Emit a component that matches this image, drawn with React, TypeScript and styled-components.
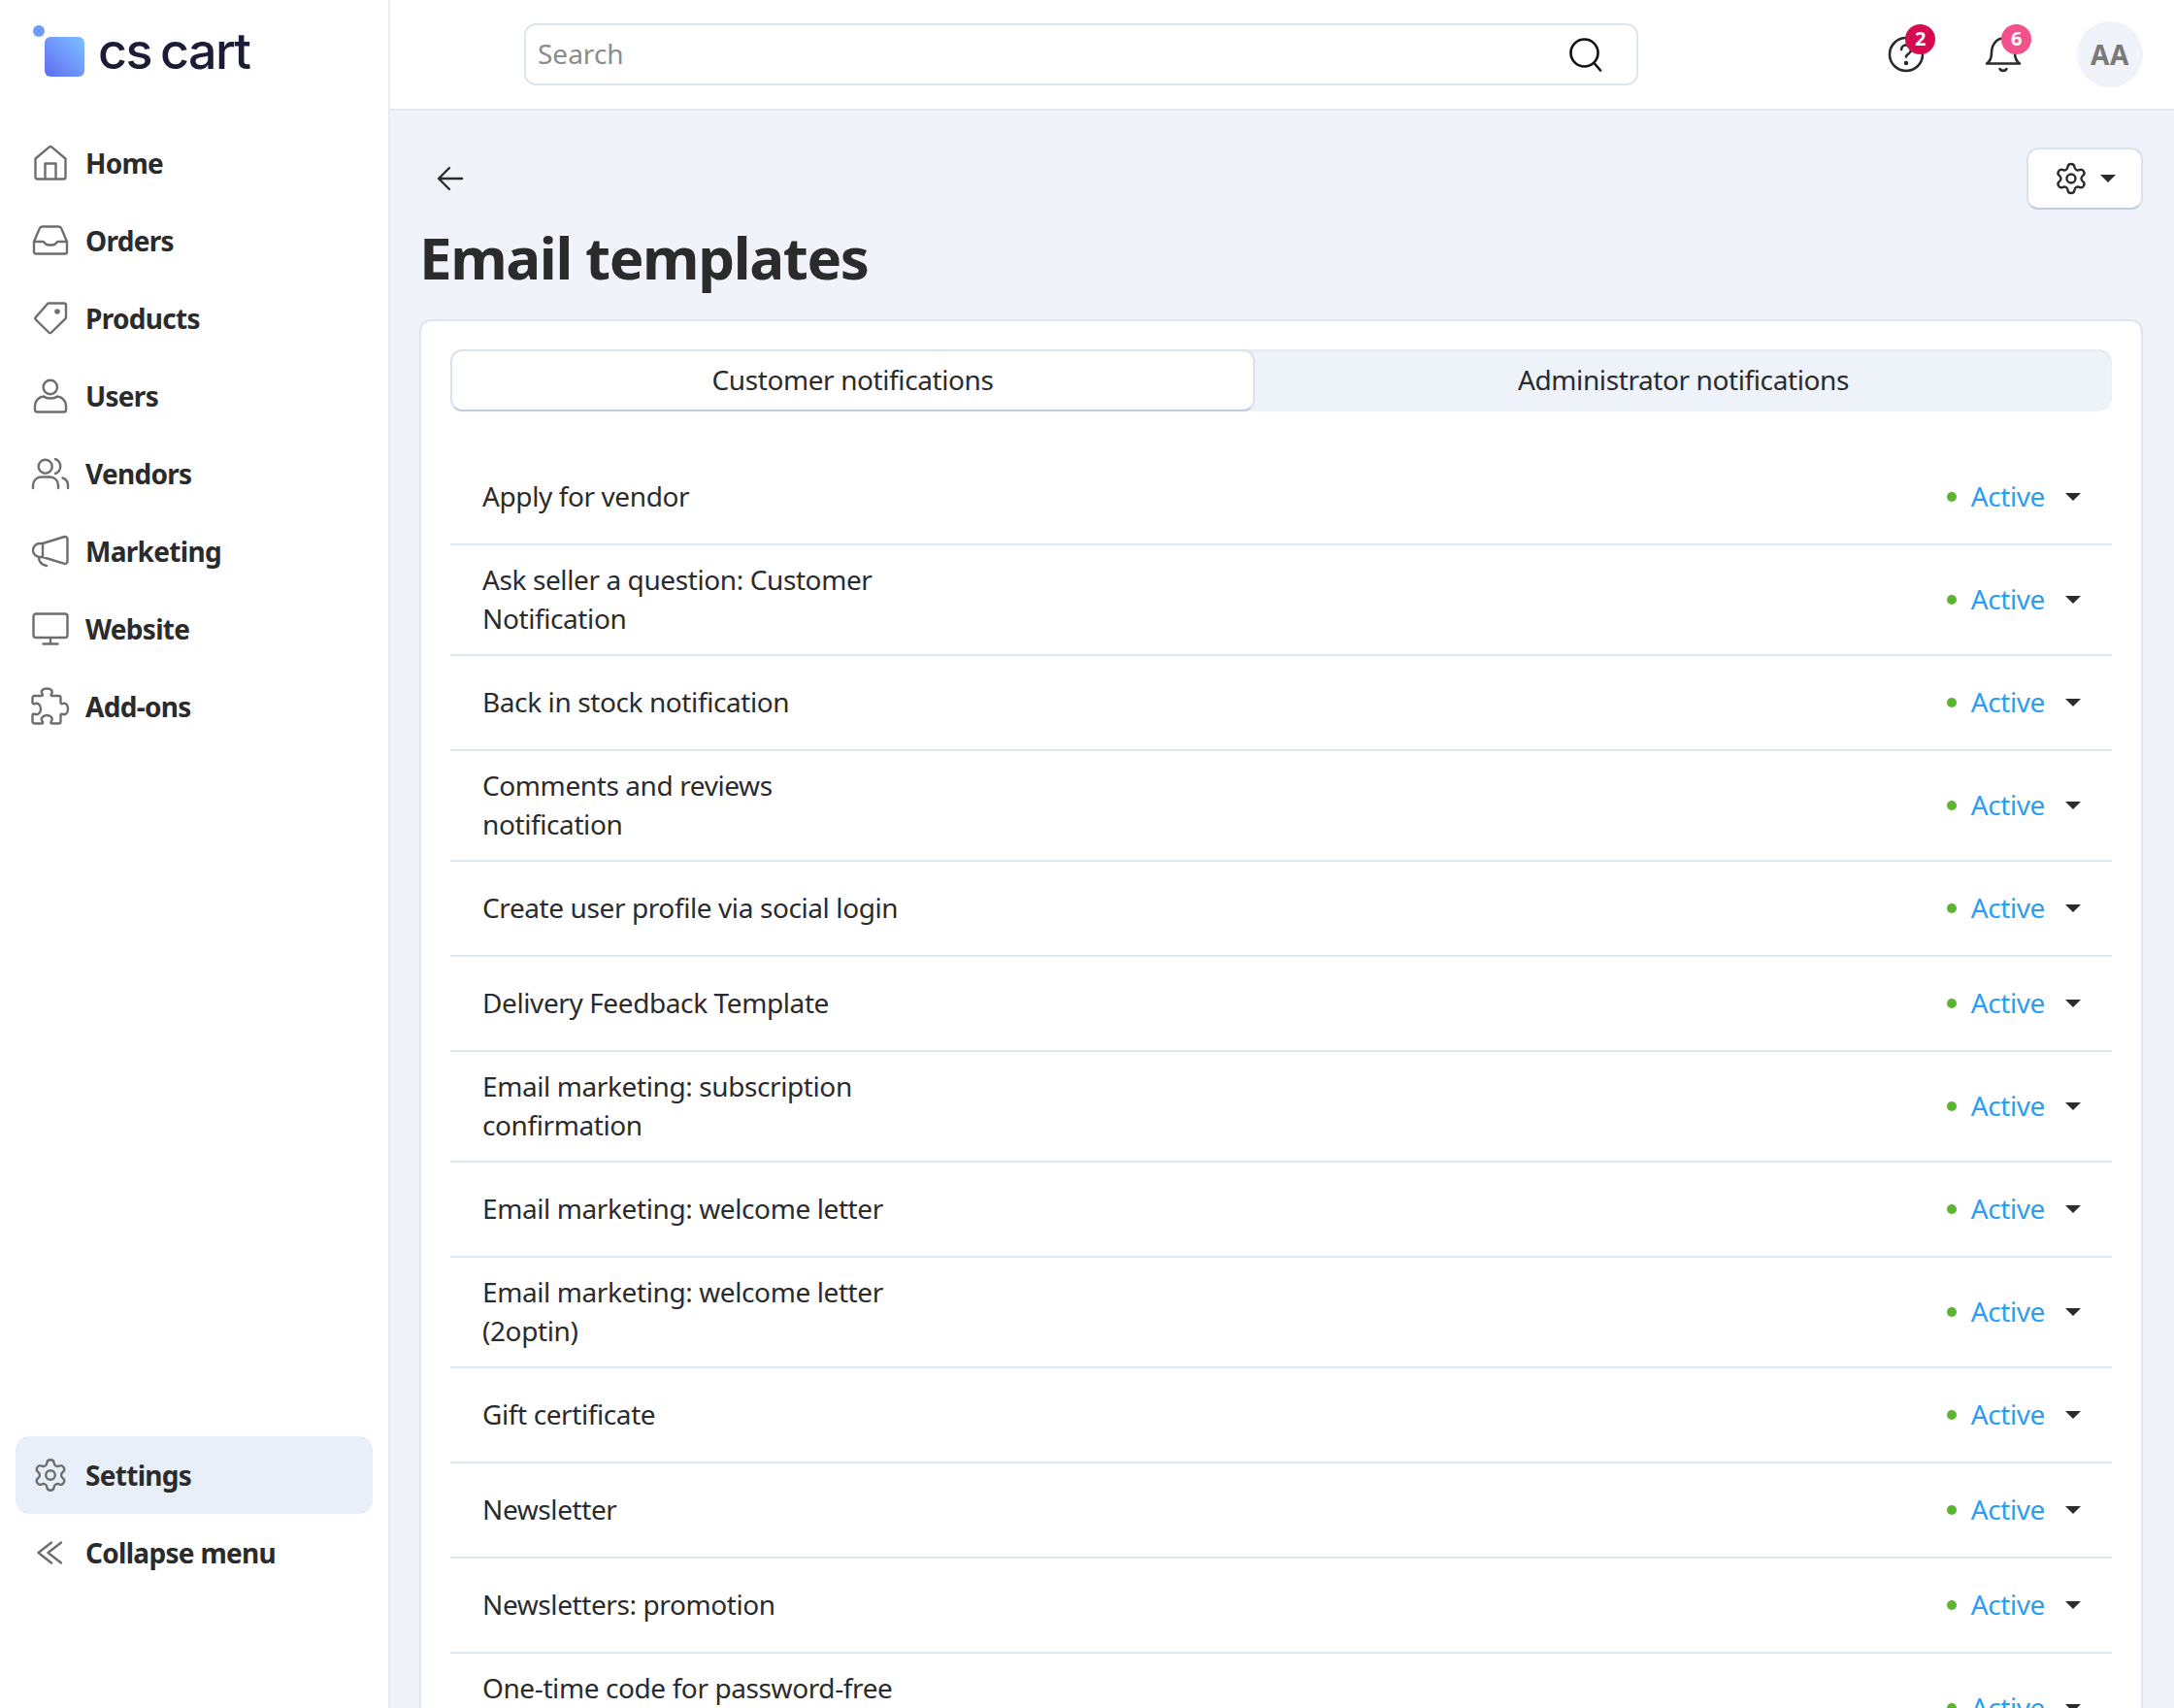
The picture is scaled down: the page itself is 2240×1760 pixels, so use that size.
import * as React from 'react';
import styled, { createGlobalStyle } from 'styled-components';
import { Settings } from 'lucide-react';

const GlobalStyle = createGlobalStyle`
  html, body {
    margin: 0;
    padding: 0;
    background: #f0f3fa;
  }

  body {
    font-family: "Noto Sans", sans-serif;
    font-size: 28px;
    line-height: 40px;
    letter-spacing: -0.4px;
    color: #2b2b2b;
  }
`;

const Page = styled.div`
  display: flex;
  width: 2240px;
  height: 1760px;
  overflow: hidden;
`;

const Sidebar = styled.aside`
  flex: 0 0 402px;
  box-sizing: border-box;
  display: flex;
  flex-direction: column;
  height: 100%;
  padding: 0 16px 120px;
  background: #fff;
  border-right: 2px solid #e7ecf4;
`;

const Logo = styled.div`
  display: flex;
  align-items: center;
  gap: 13px;
  height: 128px;
  padding: 0 0 22px 18px;
  box-sizing: border-box;
`;

const LogoText = styled.span`
  font-family: Inter, sans-serif;
  font-size: 52px;
  font-weight: 500;
  line-height: 60px;
  letter-spacing: -1.6px;
  word-spacing: -3px;
  color: #1b1d36;
`;

const NavList = styled.nav`
  display: flex;
  flex-direction: column;
`;

const Spacer = styled.div`
  flex: 1;
`;

const NavItem = styled.a<{ $active?: boolean }>`
  display: flex;
  align-items: center;
  gap: 16px;
  height: 80px;
  padding-left: 16px;
  border-radius: 14px;
  font-weight: 700;
  letter-spacing: -0.7px;
  color: #2b2b2b;
  background: ${({ $active }) => ($active ? '#e9eff8' : 'transparent')};
`;

const NavIcon = styled.svg.attrs({
  viewBox: '0 0 40 40',
  fill: 'none',
  stroke: 'currentColor',
  strokeLinecap: 'round',
  strokeLinejoin: 'round',
})`
  flex: 0 0 40px;
  width: 40px;
  height: 40px;
  stroke-width: 2.4;
  color: #6e6e6e;
`;

const GearSlot = styled.span`
  flex: 0 0 40px;
  display: flex;
  justify-content: center;
  color: #6e6e6e;
`;

const Main = styled.div`
  flex: 1;
  display: flex;
  flex-direction: column;
  min-width: 0;
`;

const Header = styled.header`
  flex: 0 0 114px;
  box-sizing: border-box;
  display: flex;
  align-items: center;
  padding: 0 32px 0 138px;
  background: #fff;
  border-bottom: 2px solid #e5e9f0;
`;

const SearchBox = styled.div`
  box-sizing: border-box;
  display: flex;
  align-items: center;
  width: 1148px;
  height: 64px;
  padding: 0 34px 0 12px;
  border: 2px solid #dde5ef;
  border-radius: 12px;
`;

const SearchInput = styled.input`
  flex: 1;
  border: 0;
  outline: 0;
  padding: 0 0 2px;
  background: transparent;
  font: inherit;
  color: #2b2b2b;

  &::placeholder {
    color: #8c8c8c;
    opacity: 1;
  }
`;

const HeaderActions = styled.div`
  display: flex;
  align-items: center;
  margin-left: auto;
`;

const HeaderIcon = styled.div`
  position: relative;
  width: 40px;
  height: 40px;
  margin-right: 60px;

  &:last-of-type {
    margin-right: 56px;
  }
`;

const Badge = styled.span<{ $color: string; $left: number }>`
  position: absolute;
  top: -11px;
  left: ${({ $left }) => $left}px;
  width: 31px;
  height: 31px;
  border-radius: 50%;
  background: ${({ $color }) => $color};
  color: #fff;
  font-size: 20px;
  font-weight: 700;
  line-height: 29px;
  text-align: center;
`;

const Avatar = styled.div`
  display: flex;
  align-items: center;
  justify-content: center;
  width: 68px;
  height: 68px;
  border-radius: 50%;
  background: #f0f3f9;
  color: #7a7a7a;
  font-weight: 700;
  font-size: 28px;
  letter-spacing: 0.6px;
`;

const Content = styled.main`
  flex: 1;
  min-height: 0;
  padding: 38px 32px 0 30px;
`;

const TopRow = styled.div`
  display: flex;
  align-items: center;
  justify-content: space-between;
  padding-left: 16px;
`;

const BackIcon = styled.svg.attrs({
  viewBox: '0 0 32 32',
  fill: 'none',
  stroke: '#2b2b2b',
  strokeLinecap: 'round',
  strokeLinejoin: 'round',
})`
  width: 32px;
  height: 32px;
  stroke-width: 2.4;
`;

const ToolButton = styled.button`
  box-sizing: border-box;
  display: flex;
  align-items: center;
  justify-content: center;
  gap: 12px;
  width: 120px;
  height: 64px;
  padding: 0;
  background: #fff;
  border: 2px solid #dae2ee;
  border-bottom-color: #bfcce0;
  border-radius: 12px;
  color: #2b2b2b;
`;

const Caret = styled.span`
  width: 0;
  height: 0;
  border-left: 8px solid transparent;
  border-right: 8px solid transparent;
  border-top: 8px solid #2b2b2b;
`;

const Title = styled.h1`
  margin: 13px 0 28px;
  font-size: 60px;
  font-weight: 700;
  line-height: 72px;
  letter-spacing: -1.4px;
  color: #2b2b2b;
`;

const Card = styled.section`
  box-sizing: border-box;
  height: 1600px;
  padding: 29px 30px 0;
  background: #fff;
  border: 2px solid #dde5ef;
  border-radius: 12px;
`;

const Tabs = styled.div`
  display: grid;
  grid-template-columns: 829px 1fr;
  height: 64px;
  margin-bottom: 40px;
  background: #eef2f9;
  border-radius: 14px;
  box-shadow: inset 0 2px 2px #e6e9ef;
`;

const Tab = styled.div<{ $active?: boolean }>`
  box-sizing: border-box;
  display: flex;
  align-items: center;
  justify-content: center;
  padding-bottom: 2px;
  color: #2b2b2b;
  border-radius: 12px;
  ${({ $active }) =>
    $active &&
    `
    background: #fff;
    border: 2px solid #dae2ee;
    border-bottom-color: #bfcce0;
  `}
`;

const Row = styled.div`
  box-sizing: border-box;
  display: flex;
  align-items: center;
  justify-content: space-between;
  min-height: 98px;
  padding: 15px 32px 15px 33px;
  border-bottom: 2px solid #dee6f0;
`;

const RowName = styled.div`
  padding-bottom: 2px;
  color: #2b2b2b;
`;

const StatusButton = styled.div`
  display: flex;
  align-items: center;
`;

const StatusDot = styled.span`
  width: 10px;
  height: 10px;
  margin-right: 15px;
  border-radius: 50%;
  background: #5cb531;
`;

const StatusLabel = styled.span`
  margin-right: 21px;
  padding-bottom: 2px;
  color: #2c9df0;
`;

const templates = [
  ['Apply for vendor'],
  ['Ask seller a question: Customer', 'Notification'],
  ['Back in stock notification'],
  ['Comments and reviews', 'notification'],
  ['Create user profile via social login'],
  ['Delivery Feedback Template'],
  ['Email marketing: subscription', 'confirmation'],
  ['Email marketing: welcome letter'],
  ['Email marketing: welcome letter', '(2optin)'],
  ['Gift certificate'],
  ['Newsletter'],
  ['Newsletters: promotion'],
  ['One-time code for password-free', 'authentication'],
];

const navIcons: Record<string, React.ReactNode> = {
  Home: (
    <path d="M4.5 15.5 18.6 3.6a2.2 2.2 0 0 1 2.8 0l14.1 11.9v19a2 2 0 0 1-2 2h-27a2 2 0 0 1-2-2ZM14.5 36.5v-16h11v16" />
  ),
  Orders: (
    <path d="M3 21 8.8 7.4a3 3 0 0 1 2.7-1.9h17a3 3 0 0 1 2.7 1.9L37 21v10.5a2 2 0 0 1-2 2H5a2 2 0 0 1-2-2ZM3 21h9c1.5 0 1.8 1 2.6 2 1.4 2 9.4 2 10.8 0 .8-1 1.1-2 2.6-2h9" />
  ),
  Products: (
    <>
      <path d="M18 4.5h16a2 2 0 0 1 2 2V19a2 2 0 0 1-.6 1.4L21 34.5a2 2 0 0 1-2.8 0L5 21.5a2 2 0 0 1 0-2.8L17 5a1.6 1.6 0 0 1 1-.5Z" />
      <circle cx="27" cy="13" r="1.6" fill="currentColor" />
    </>
  ),
  Users: (
    <>
      <circle cx="19.8" cy="11" r="7.2" />
      <path d="M4 34.5V30c0-5 4-9 9-9.5 3 2.6 11 2.6 14 0 5 .5 9 4.5 9 9.5v4.500a2 2 0 0 1-2 2H6a2 2 0 0 1-2-2Z" />
    </>
  ),
  Vendors: (
    <>
      <circle cx="14.7" cy="12.700" r="7" />
      <path d="M25 5a8 8 0 0 1 0 15M2 35v-3a8.500 8.500 0 0 1 8.500-8.500h9a8.500 8.500 0 0 1 8.500 8.500v3M32.500 24.500a8 8 0 0 1 5.500 7.500v3" />
    </>
  ),
  Marketing: (
    <path d="M12 12 34.500 5a2.500 2.500 0 0 1 3 2.400v23.100a2.500 2.500 0 0 1-3 2.400L12 26ZM12 12H9a7 7 0 0 0 0 14h3M8 26c0 4.500 3 8 8 9" />
  ),
  Website: (
    <path d="M5 4.500h30a2.500 2.500 0 0 1 2.500 2.500v19.500a2.500 2.500 0 0 1-2.500 2.500H5a2.500 2.500 0 0 1-2.500-2.500V7A2.500 2.500 0 0 1 5 4.500ZM20 29v6M12.500 35.500h15" />
  ),
  'Add-ons': (
    <path d="M3.500 9H11c1 0 1.500-1 .5-2-2-3 .5-5.500 4.800-5.500S23 4 21 7c-1 1-.5 2 .5 2h7a2 2 0 0 1 2 2v5c0 1.500 1.500 1.500 2.500 1 3-1.500 5 2 5 5.500s-2 6.500-5 5.500c-1-.5-2.500-.5-2.500 1v6.500a2 2 0 0 1-2 2h-7c-1.500 0-1.500-1.500-.5-2.500 2-2.500-.5-6-4.700-6S9.500 32.500 11.500 35c1 1 1 2.500-.5 2.500H3.500a2 2 0 0 1-2-2V29c0-1.500 1.500-1.500 3-1 2.500 1 5.500-1.500 5.500-5.500S7 16 4.500 17c-1.500.5-3 .5-3-1v-5a2 2 0 0 1 2-2Z" />
  ),
};

const LogoMark = () => (
  <svg width="54" height="54" viewBox="0 0 54 54" aria-hidden="true">
    <defs>
      <linearGradient id="logo-fill" x1="0" y1="1" x2="1" y2="0">
        <stop offset="0" stopColor="#5f6df5" />
        <stop offset="1" stopColor="#7dc0ff" />
      </linearGradient>
    </defs>
    <circle cx="6" cy="6" r="6" fill="#6f9dfb" />
    <rect x="12" y="12" width="41" height="41" rx="6" fill="url(#logo-fill)" />
  </svg>
);

const App = () => (
  <>
    <GlobalStyle />
    <Page>
      <Sidebar>
        <Logo>
          <LogoMark />
          <LogoText>cs cart</LogoText>
        </Logo>
        <NavList>
          {Object.keys(navIcons).map((name) => (
            <NavItem key={name}>
              <NavIcon>{navIcons[name]}</NavIcon>
              {name}
            </NavItem>
          ))}
        </NavList>
        <Spacer />
        <NavItem $active>
          <GearSlot>
            <Settings size={38} strokeWidth={1.5} />
          </GearSlot>
          Settings
        </NavItem>
        <NavItem>
          <NavIcon>
            <path d="M21 9.500 7.500 20 21 30.500M31 9.500 17.500 20 31 30.500" />
          </NavIcon>
          Collapse menu
        </NavItem>
      </Sidebar>
      <Main>
        <Header>
          <SearchBox>
            <SearchInput placeholder="Search" />
            <svg width="36" height="36" viewBox="0 0 36 36" fill="none" stroke="#111" strokeWidth="2.6" strokeLinecap="round">
              <circle cx="16.500" cy="16.500" r="14" />
              <path d="m26.500 27 6.500 7.500" />
            </svg>
          </SearchBox>
          <HeaderActions>
            <HeaderIcon>
              <svg width="40" height="40" viewBox="0 0 40 40" fill="none" stroke="#2b2b2b" strokeWidth="2.6" strokeLinecap="round">
                <circle cx="20" cy="20" r="17" />
                <path d="M15 15a5 5 0 0 1 10 1c0 3-5 4-5 6.500" />
                <circle cx="20" cy="29" r="1" fill="#2b2b2b" />
              </svg>
              <Badge $color="#d80a50" $left={19}>2</Badge>
            </HeaderIcon>
            <HeaderIcon>
              <svg width="40" height="40" viewBox="0 0 40 40" fill="none" stroke="#2b2b2b" strokeWidth="2.6" strokeLinecap="round" strokeLinejoin="round">
                <path d="M3 29.500c3-2 5-5 5-11 0-8 5-15 12-15s12 7 12 15c0 6 2 9 5 11ZM16.500 35c1.500 2.500 5.500 2.500 7 0" />
              </svg>
              <Badge $color="#f2528c" $left={18}>6</Badge>
            </HeaderIcon>
          </HeaderActions>
          <Avatar>AA</Avatar>
        </Header>
        <Content>
          <TopRow>
            <BackIcon>
              <path d="M28 16H4M15 5 4 16l11 11" />
            </BackIcon>
            <ToolButton>
              <Settings size={36} strokeWidth={1.6} />
              <Caret />
            </ToolButton>
          </TopRow>
          <Title>Email templates</Title>
          <Card>
            <Tabs>
              <Tab $active>Customer notifications</Tab>
              <Tab>Administrator notifications</Tab>
            </Tabs>
            {templates.map((lines) => (
              <Row key={lines.join(' ')}>
                <RowName>
                  {lines.map((line) => (
                    <div key={line}>{line}</div>
                  ))}
                </RowName>
                <StatusButton>
                  <StatusDot />
                  <StatusLabel>Active</StatusLabel>
                  <Caret />
                </StatusButton>
              </Row>
            ))}
          </Card>
        </Content>
      </Main>
    </Page>
  </>
);

export default App;
